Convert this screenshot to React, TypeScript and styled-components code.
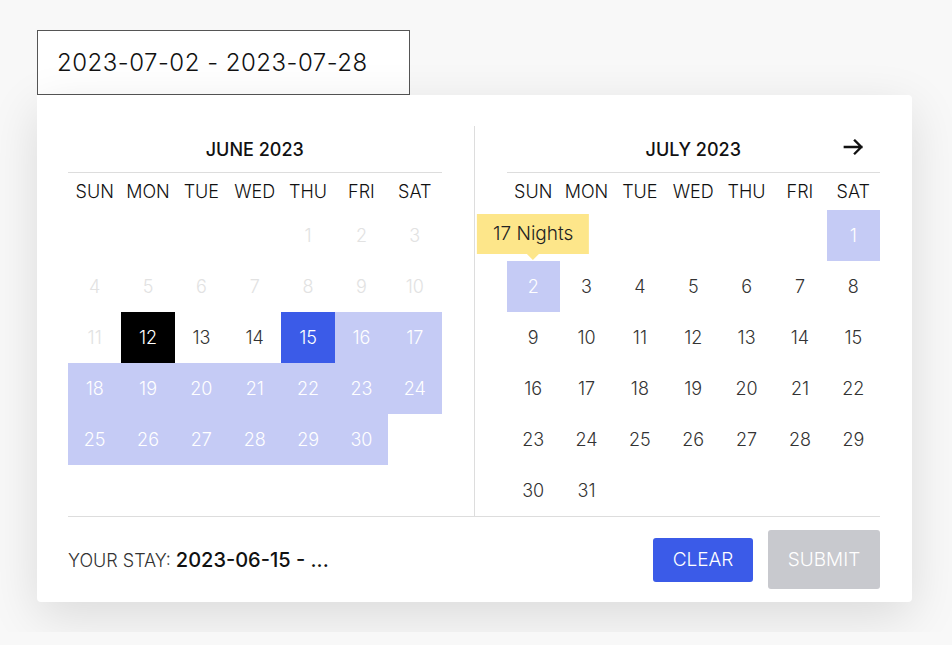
import styled, { createGlobalStyle } from 'styled-components';

const GlobalStyle = createGlobalStyle`
    body {
        margin: 0;
        background: #f8f8f8;
        font-family: "Inter", "Noto Sans", sans-serif;
        color: #222;
    }
`

const Page = styled.div`
    padding: 30px 37px;
    width: 875px;
`

const DateInput = styled.div`
    box-sizing: border-box;
    width: 373px;
    height: 65px;
    border: 1px solid #555;
    background: #fff;
    padding: 0 19px;
    display: flex;
    align-items: center;
    font-size: 24px;
    font-weight: 300;
    letter-spacing: 0.5px;
    color: #111;
`

const Panel = styled.div`
    background: #fff;
    border-radius: 0 4px 4px 4px;
    box-shadow: 0 14px 50px rgba(0, 0, 0, 0.12);
    padding: 31px 32px 13px 31px;
`

const Months = styled.div`
    display: flex;
    gap: 32px;
`

const Divider = styled.div`
    width: 1px;
    background: #ddd;
`

const Month = styled.div`
    width: 374px;
`

const MonthTitle = styled.div`
    height: 46px;
    border-bottom: 1px solid #ddd;
    display: flex;
    align-items: center;
    justify-content: center;
    font-size: 18px;
    font-weight: 500;
    color: #111;
    position: relative;
`

const NextArrow = styled.button`
    position: absolute;
    right: 15px;
    top: 10px;
    border: 0;
    background: none;
    padding: 0;
    display: flex;
`

const Grid = styled.div`
    display: grid;
    grid-template-columns: repeat(7, 1fr);
    grid-template-rows: 37px repeat(6, 51px);
`

const WeekDay = styled.div`
    display: flex;
    align-items: center;
    justify-content: center;
    font-size: 18px;
    font-weight: 300;
    color: #111;
`

type DayKind = 'past' | 'normal' | 'today' | 'start' | 'range' | 'empty';

const dayBg: Record<DayKind, string> = {
    past: 'transparent',
    normal: 'transparent',
    empty: 'transparent',
    today: '#000',
    start: '#3b5be8',
    range: '#c5cbf5',
};

const dayColor: Record<DayKind, string> = {
    past: '#e2e2e2',
    normal: '#333',
    empty: 'transparent',
    today: '#fff',
    start: '#fff',
    range: '#fff',
};

const Day = styled.div<{ $kind: DayKind }>`
    display: flex;
    align-items: center;
    justify-content: center;
    font-size: 18px;
    font-weight: 300;
    background: ${p => dayBg[p.$kind]};
    color: ${p => dayColor[p.$kind]};
    position: relative;
`

const Tooltip = styled.div`
    position: absolute;
    bottom: calc(100% + 7px);
    left: 50%;
    transform: translateX(-50%);
    background: #fde68a;
    color: #222;
    font-size: 19px;
    font-weight: 300;
    white-space: nowrap;
    padding: 8px 16px 9px;
    z-index: 2;

    &::after {
        content: "";
        position: absolute;
        top: 100%;
        left: 50%;
        margin-left: -6px;
        border: 6px solid transparent;
        border-top-color: #fde68a;
        border-bottom: 0;
    }
`

const Footer = styled.div`
    border-top: 1px solid #ddd;
    display: flex;
    align-items: center;
    padding-top: 13px;
`

const Stay = styled.div`
    flex: 1;
    font-size: 18px;
    font-weight: 300;
    color: #333;

    b {
        font-size: 20px;
        font-weight: 500;
        color: #111;
    }
`

const Button = styled.button<{ $primary?: boolean }>`
    border: 0;
    border-radius: 3px;
    font-family: inherit;
    font-size: 19px;
    font-weight: 300;
    color: #fff;
    background: ${p => (p.$primary ? '#3b5be8' : '#c8c9ce')};
    height: ${p => (p.$primary ? '44px' : '59px')};
    width: ${p => (p.$primary ? '100px' : '112px')};
    margin-left: 15px;
`

const WEEK = ['SUN', 'MON', 'TUE', 'WED', 'THU', 'FRI', 'SAT'];

function kindFor(month: number, d: number): DayKind {
    if (month === 6) {
        if (d < 12) return 'past';
        if (d === 12) return 'today';
        if (d === 15) return 'start';
        if (d > 15) return 'range';
        return 'normal';
    }
    if (d === 1 || d === 2) return 'range';
    return 'normal';
}

function MonthView(props: { title: string; month: number; offset: number; days: number; next?: boolean }) {
    const cells: (number | null)[] = [];
    for (let i = 0; i < props.offset; i++) cells.push(null);
    for (let d = 1; d <= props.days; d++) cells.push(d);
    return (
        <Month>
            <MonthTitle>
                {props.title}
                {props.next && (
                    <NextArrow aria-label="next month">
                        <svg width="22" height="22" viewBox="0 0 24 24" fill="none" stroke="#111" strokeWidth="2.6" strokeLinecap="square">
                            <path d="M2 12h18M13 5l7 7-7 7" />
                        </svg>
                    </NextArrow>
                )}
            </MonthTitle>
            <Grid>
                {WEEK.map(w => <WeekDay key={w}>{w}</WeekDay>)}
                {cells.map((d, i) =>
                    d === null ? <Day key={i} $kind="empty" /> :
                        <Day key={i} $kind={kindFor(props.month, d)}>
                            {d}
                            {props.month === 7 && d === 2 && <Tooltip>17 Nights</Tooltip>}
                        </Day>
                )}
            </Grid>
        </Month>
    );
}

export default function App() {
    return (
        <Page>
            <GlobalStyle />
            <DateInput>2023-07-02 - 2023-07-28</DateInput>
            <Panel>
                <Months>
                    <MonthView title="JUNE 2023" month={6} offset={4} days={30} />
                    <Divider />
                    <MonthView title="JULY 2023" month={7} offset={6} days={31} next />
                </Months>
                <Footer>
                    <Stay>YOUR STAY: <b>2023-06-15 - ...</b></Stay>
                    <Button $primary>CLEAR</Button>
                    <Button>SUBMIT</Button>
                </Footer>
            </Panel>
        </Page>
    );
}
